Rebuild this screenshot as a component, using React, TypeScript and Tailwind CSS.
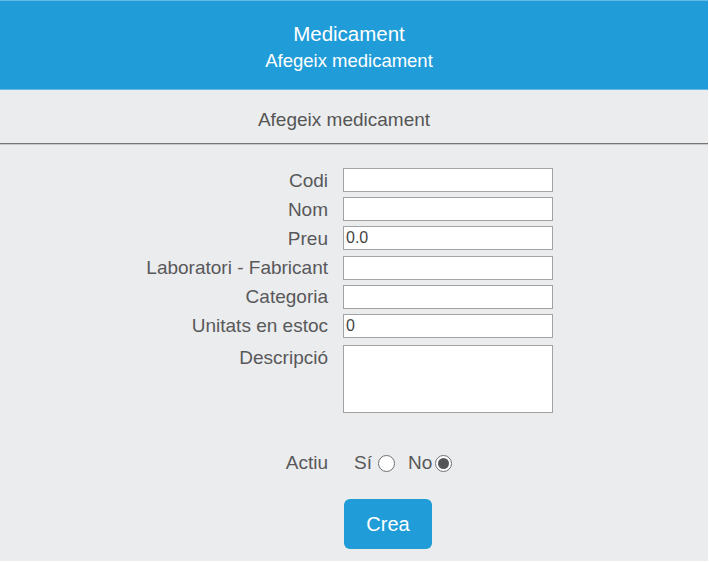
import React from "react";

function Radio({ checked }: { checked?: boolean }) {
  return (
    <span className="inline-flex h-[17px] w-[17px] items-center justify-center rounded-full border border-[#6f6f6f] bg-white">
      {checked ? <span className="h-[11px] w-[11px] rounded-full bg-[#555558]" /> : null}
    </span>
  );
}

const fields: { label: string; value: string }[] = [
  { label: "Codi", value: "" },
  { label: "Nom", value: "" },
  { label: "Preu", value: "0.0" },
  { label: "Laboratori - Fabricant", value: "" },
  { label: "Categoria", value: "" },
  { label: "Unitats en estoc", value: "0" },
];

export default function App() {
  return (
    <div className="h-[563px] w-[709px] overflow-hidden bg-white font-['Liberation_Sans',Arial,sans-serif]">
      <div className="h-[561px] w-[708px] bg-[#ebecee]">
        <header className="h-[90px] border-t border-b border-[#66b9e4] bg-[#209dd9] pr-[10px] pt-[19px] text-center leading-[27px] text-white">
          <div className="text-[20.5px]">Medicament</div>
          <div className="text-[18.5px]">Afegeix medicament</div>
        </header>
        <div className="h-[54px] border-b border-[#777] pr-[20px] pt-[16px] text-center text-[19px] leading-[27px] text-[#555] shadow-[0_1px_0_#c9c9cb]">
          Afegeix medicament
        </div>
        <form className="grid grid-cols-[328px_210px] gap-x-[15px] gap-y-[5.2px] pt-[24px] text-[19px] text-[#58585a]">
          {fields.map((f) => (
            <React.Fragment key={f.label}>
              <label className="flex h-[24px] items-center justify-end leading-none">{f.label}</label>
              <div className="flex h-[24px] items-center border border-[#a3a3a3] bg-white px-[2px] text-[16px] leading-none text-[#444]">
                {f.value}
              </div>
            </React.Fragment>
          ))}
          <label className="mt-[2px] pt-[3px] text-right leading-[20px]">Descripció</label>
          <div className="mt-[2px] h-[68px] border border-[#a3a3a3] bg-white" />
          <label className="mt-[32px] flex h-[24px] items-center justify-end leading-none">Actiu</label>
          <div className="mt-[32px] flex h-[24px] items-center pl-[11px] leading-none">
            <span>Sí</span>
            <span className="ml-[6px] mt-[3px] flex"><Radio /></span>
            <span className="ml-[13px]">No</span>
            <span className="ml-[3px] mt-[3px] flex"><Radio checked /></span>
          </div>
          <div />
          <div className="pt-[19px]">
            <button
              type="button"
              className="ml-[1px] h-[50px] w-[88px] rounded-[6px] bg-[#209dd9] text-[20px] text-white"
            >
              Crea
            </button>
          </div>
        </form>
      </div>
    </div>
  );
}
